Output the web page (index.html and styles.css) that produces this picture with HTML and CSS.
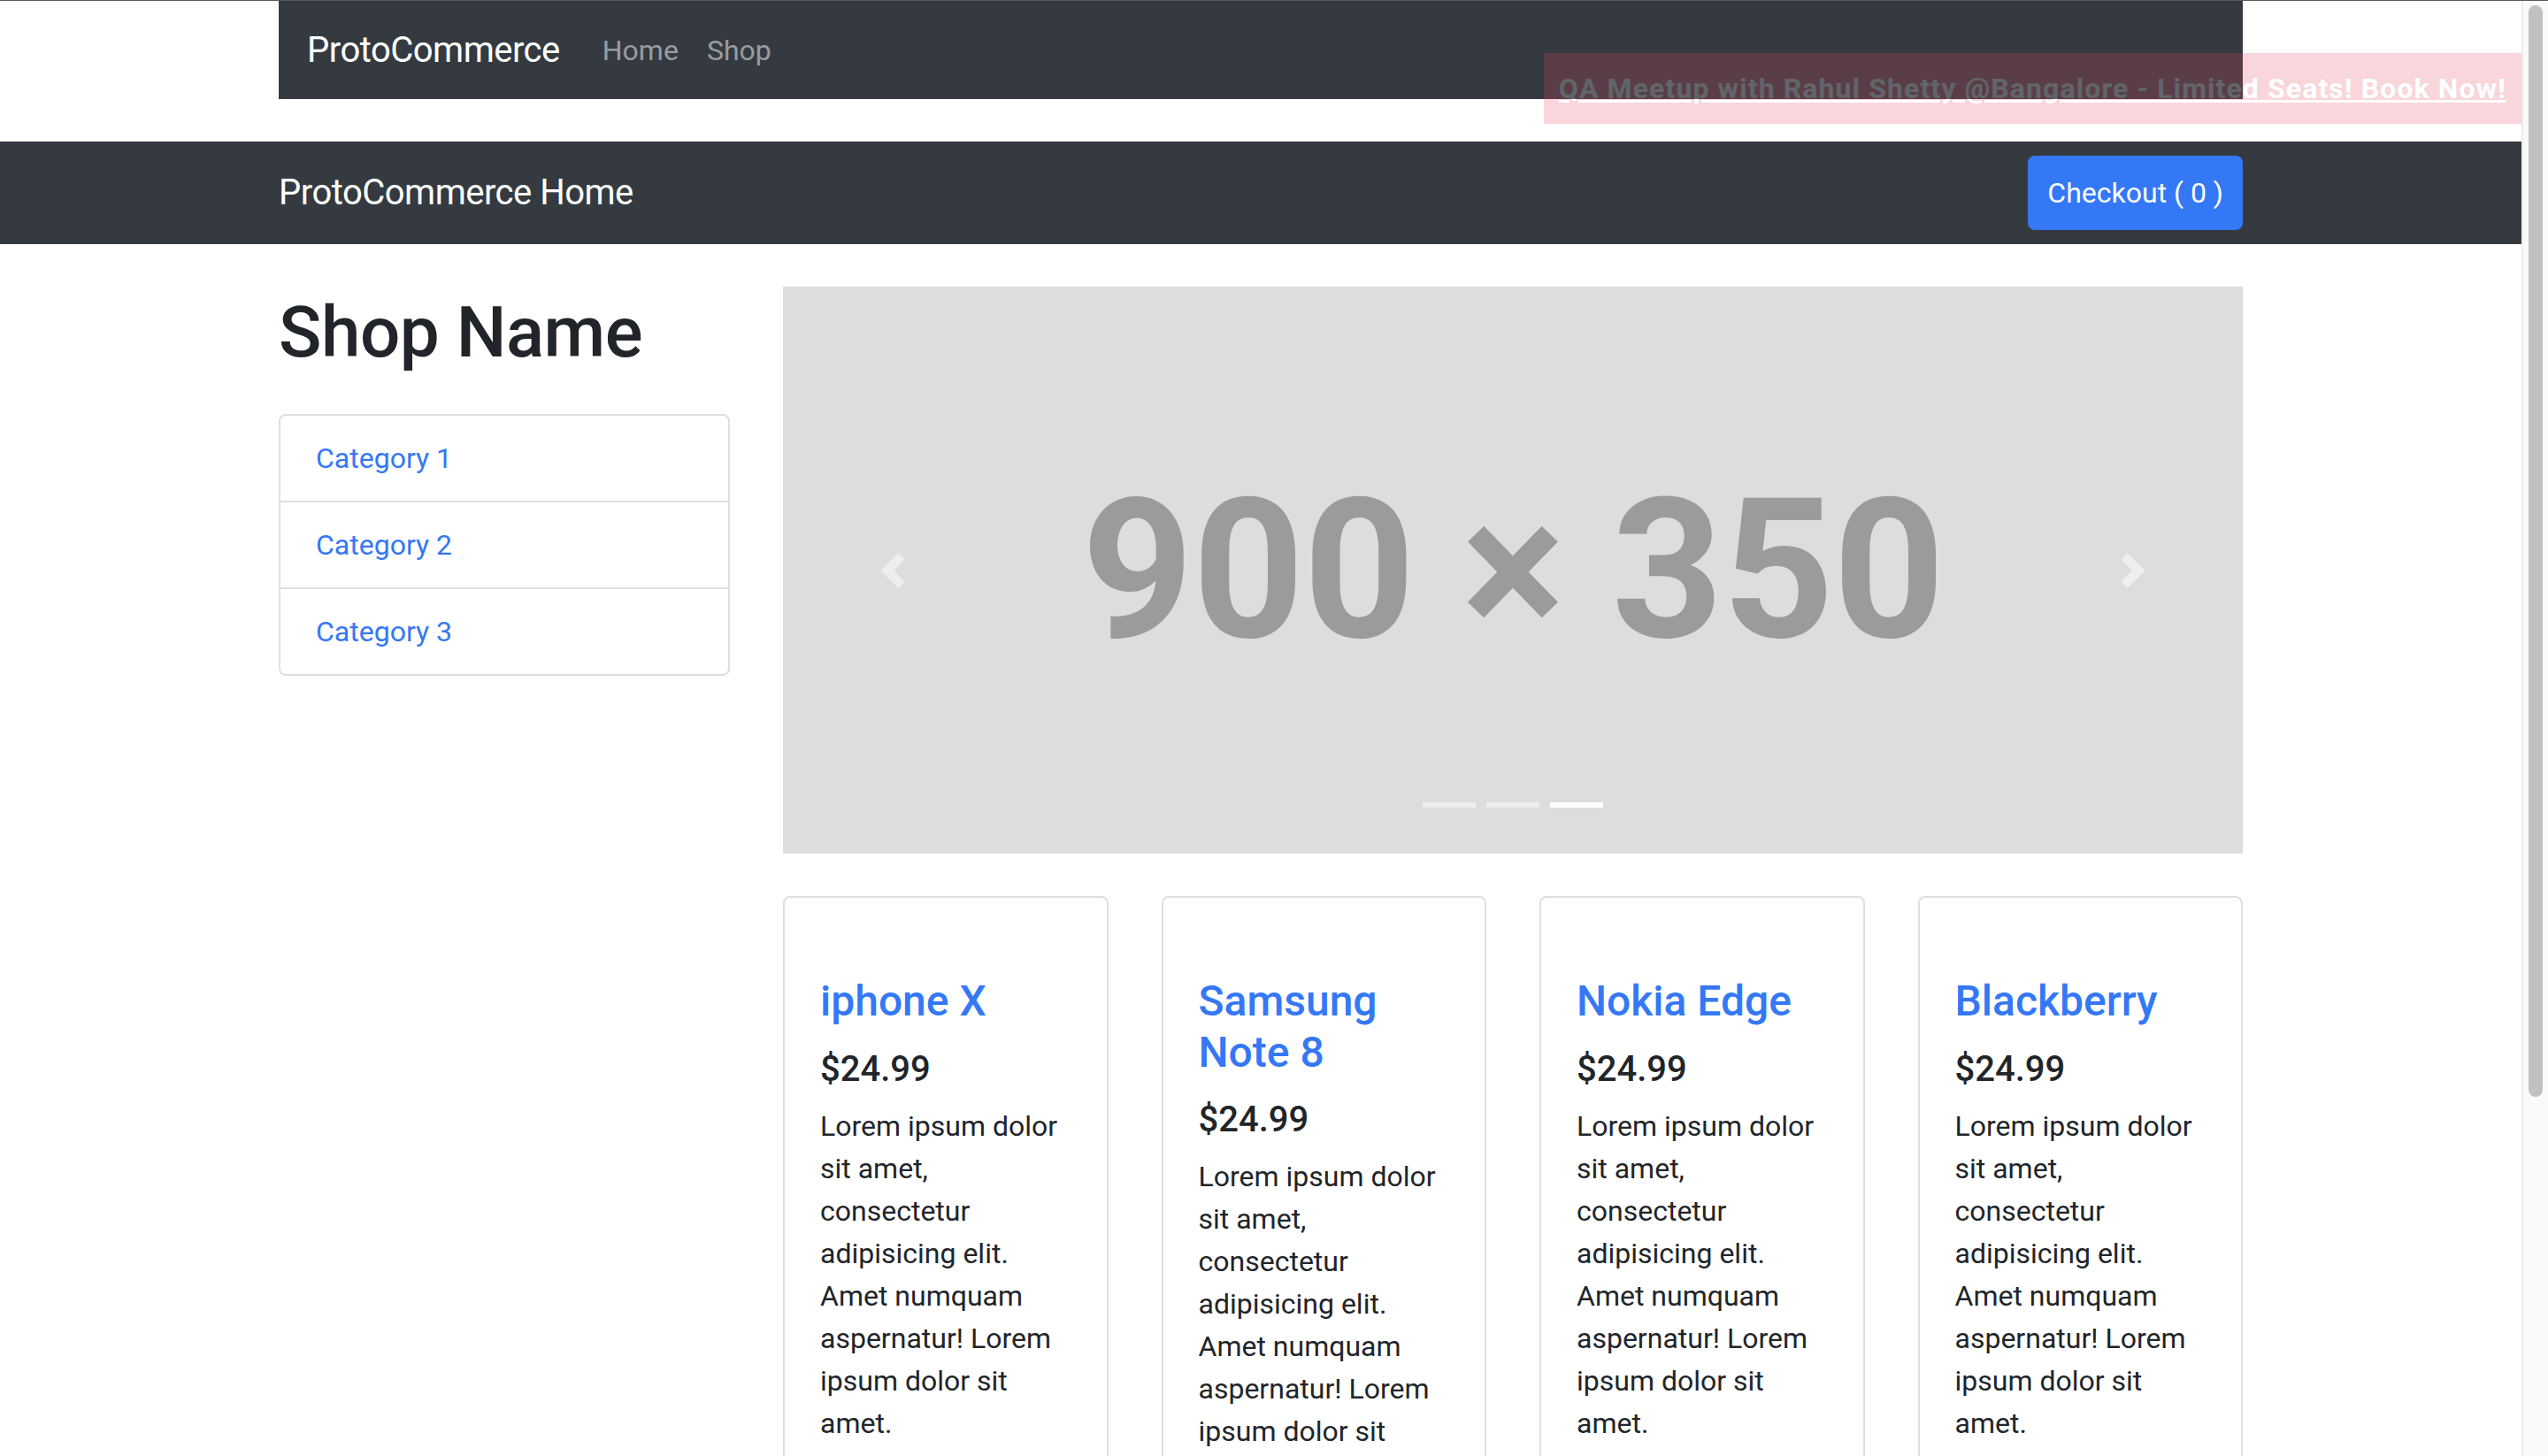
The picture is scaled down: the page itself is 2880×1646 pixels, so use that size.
FILE: index.html
```html
<!DOCTYPE html>
<html lang="en">
<head>
<meta charset="utf-8">
<title>ProtoCommerce</title>
<link rel="stylesheet" href="styles.css">
</head>
<body>
<div class="page">
  <div class="site">
    <header class="top">
      <div class="container">
        <nav class="nav1">
          <a class="brand" href="#">ProtoCommerce</a>
          <a class="nav-link" href="#">Home</a>
          <a class="nav-link" href="#">Shop</a>
        </nav>
      </div>
    </header>

    <a class="promo" href="#">QA Meetup with Rahul Shetty @Bangalore - Limited Seats! Book Now!</a>

    <nav class="nav2">
      <div class="container nav2-inner">
        <a class="brand" href="#">ProtoCommerce Home</a>
        <button class="btn-checkout" type="button">Checkout ( 0 )</button>
      </div>
    </nav>

    <main class="container main">
      <aside class="side">
        <h1 class="shop-name">Shop Name</h1>
        <div class="list-group">
          <a class="list-item" href="#">Category 1</a>
          <a class="list-item" href="#">Category 2</a>
          <a class="list-item" href="#">Category 3</a>
        </div>
      </aside>

      <section class="content">
        <div class="carousel">
          <a class="ctrl" href="#" aria-label="Previous">
            <svg viewBox="0 0 8 8"><path d="M5.25 0l-4 4 4 4 1.5-1.5L4.25 4l2.5-2.5L5.25 0z"/></svg>
          </a>
          <div class="ph-text">900 × 350</div>
          <a class="ctrl" href="#" aria-label="Next">
            <svg viewBox="0 0 8 8"><path d="M2.75 0l-1.5 1.5L3.75 4l-2.5 2.5L2.75 8l4-4-4-4z"/></svg>
          </a>
          <div class="indicators">
            <span></span><span></span><span class="active"></span>
          </div>
        </div>

        <div class="cards">
          <div class="card">
            <div class="card-img"></div>
            <div class="card-body">
              <h4 class="card-title"><a href="#">iphone X</a></h4>
              <h5 class="card-price">$24.99</h5>
              <p class="card-text">Lorem ipsum dolor sit amet, consectetur adipisicing elit. Amet numquam aspernatur! Lorem ipsum dolor sit amet.</p>
            </div>
          </div>
          <div class="card">
            <div class="card-img"></div>
            <div class="card-body">
              <h4 class="card-title"><a href="#">Samsung Note 8</a></h4>
              <h5 class="card-price">$24.99</h5>
              <p class="card-text">Lorem ipsum dolor sit amet, consectetur adipisicing elit. Amet numquam aspernatur! Lorem ipsum dolor sit amet.</p>
            </div>
          </div>
          <div class="card">
            <div class="card-img"></div>
            <div class="card-body">
              <h4 class="card-title"><a href="#">Nokia Edge</a></h4>
              <h5 class="card-price">$24.99</h5>
              <p class="card-text">Lorem ipsum dolor sit amet, consectetur adipisicing elit. Amet numquam aspernatur! Lorem ipsum dolor sit amet.</p>
            </div>
          </div>
          <div class="card">
            <div class="card-img"></div>
            <div class="card-body">
              <h4 class="card-title"><a href="#">Blackberry</a></h4>
              <h5 class="card-price">$24.99</h5>
              <p class="card-text">Lorem ipsum dolor sit amet, consectetur adipisicing elit. Amet numquam aspernatur! Lorem ipsum dolor sit amet.</p>
            </div>
          </div>
        </div>
      </section>
    </main>
  </div>
  <div class="scrollbar"><div class="thumb"></div></div>
</div>
</body>
</html>
```

FILE: styles.css
```css
html, body {
  margin: 0;
  padding: 0;
  height: 1646px;
  overflow: hidden;
}

body {
  font-family: Roboto, "Liberation Sans", Arial, sans-serif;
  font-size: 32px;
  line-height: 1.5;
  color: #212529;
  background: #fff;
}

.page {
  display: flex;
  height: 1646px;
  border-top: 1px solid #5a5a5a;
  box-sizing: border-box;
}

.site {
  flex: 1;
  min-width: 0;
  position: relative;
  overflow: hidden;
}

.scrollbar {
  flex: none;
  width: 30px;
  box-sizing: border-box;
  background: #fafafa;
  border-left: 2px solid #ececec;
  padding: 5px 6px 0 6px;
}

.thumb {
  height: 1234px;
  background: #c1c1c1;
  border-radius: 8px;
}

.container {
  width: 2220px;
  margin: 0 auto;
}

/* top navbar */
.top {
  height: 111px;
}

.nav1 {
  height: 111px;
  box-sizing: border-box;
  background: #343a40;
  display: flex;
  align-items: center;
  padding: 0 32px;
}

.brand {
  color: #fff;
  font-size: 40px;
  line-height: 1.5;
  letter-spacing: -0.5px;
  text-decoration: none;
  margin-right: 32px;
}

.nav-link {
  color: rgba(255, 255, 255, 0.5);
  text-decoration: none;
  font-size: 32px;
  padding: 0 16px;
}

/* promo banner overlay */
.promo {
  position: absolute;
  top: 59px;
  right: 0;
  height: 80px;
  line-height: 80px;
  padding: 0 17px;
  background: rgb(225, 75, 95);
  opacity: 0.22;
  color: #fff;
  font-weight: 700;
  font-size: 32px;
  letter-spacing: 1.1px;
  white-space: nowrap;
  text-decoration: underline;
}

/* second navbar */
.nav2 {
  margin-top: 48px;
  height: 116px;
  background: #343a40;
}

.nav2-inner {
  height: 100%;
  display: flex;
  align-items: center;
  justify-content: space-between;
}

.btn-checkout {
  font-family: inherit;
  font-size: 32px;
  color: #fff;
  background: #3478f6;
  border: 0;
  border-radius: 8px;
  height: 84px;
  padding: 0 22px;
}

/* main */
.main {
  display: grid;
  grid-template-columns: 510px 1650px;
  column-gap: 60px;
  align-items: start;
}

.shop-name {
  margin: 52px 0 44px;
  font-size: 80px;
  font-weight: 500;
  line-height: 1.2;
  letter-spacing: -0.5px;
}

.list-group {
  border: 2px solid #dfdfdf;
  border-radius: 8px;
}

.list-item {
  display: block;
  padding: 24px 40px;
  color: #3478f6;
  text-decoration: none;
}

.list-item + .list-item {
  border-top: 2px solid #dfdfdf;
}

/* carousel */
.carousel {
  position: relative;
  margin: 48px 0;
  height: 641px;
  background: #dddddd;
  display: flex;
}

.ctrl {
  width: 15%;
  display: flex;
  align-items: center;
  justify-content: center;
}

.ctrl svg {
  width: 40px;
  height: 40px;
  fill: rgba(255, 255, 255, 0.5);
}

.ph-text {
  flex: 1;
  display: flex;
  align-items: center;
  justify-content: center;
  font-size: 220px;
  font-weight: 700;
  line-height: 1;
  letter-spacing: -1px;
  color: #9b9b9b;
  white-space: nowrap;
}

.indicators {
  position: absolute;
  left: 0;
  right: 0;
  bottom: 52px;
  display: flex;
  justify-content: center;
}

.indicators span {
  width: 60px;
  height: 6px;
  margin: 0 6px;
  background: rgba(255, 255, 255, 0.5);
}

.indicators span.active {
  background: #fff;
}

/* cards */
.cards {
  display: grid;
  grid-template-columns: repeat(4, 1fr);
  column-gap: 60px;
}

.card {
  border: 2px solid #dfdfdf;
  border-radius: 8px;
  min-height: 900px;
}

.card-img {
  height: 48px;
}

.card-body {
  padding: 40px;
}

.card-title {
  margin: 0 0 24px;
  font-size: 48px;
  font-weight: 500;
  line-height: 1.2;
}

.card-title a {
  color: #3478f6;
  text-decoration: none;
}

.card-price {
  margin: 0 0 16px;
  font-size: 40px;
  font-weight: 500;
  line-height: 1.2;
}

.card-text {
  margin: 0;
}
```
